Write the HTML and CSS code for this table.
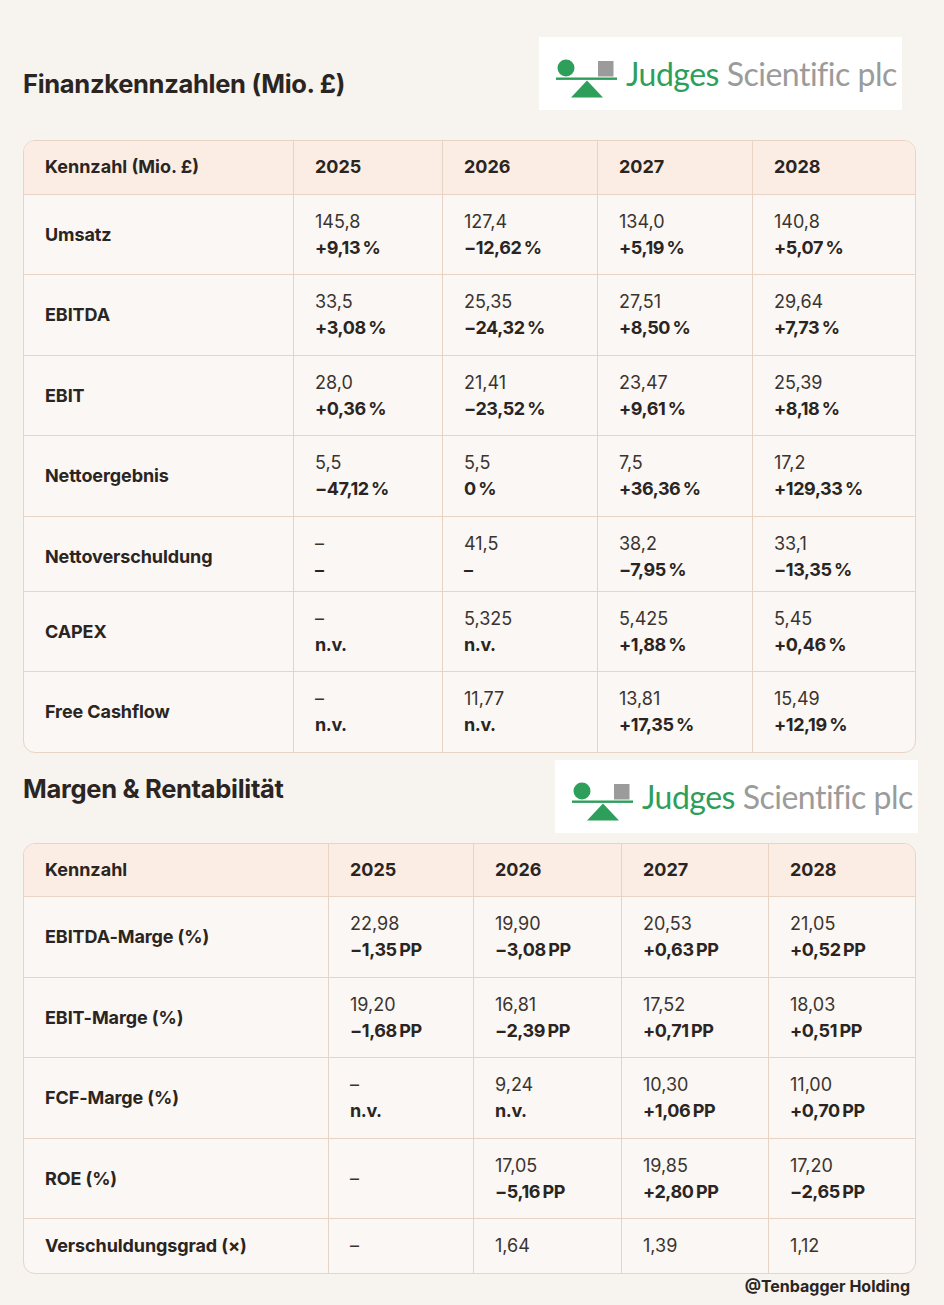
FILE: index.html
```html
<!DOCTYPE html>
<html lang="de">
<head>
<meta charset="utf-8">
<title>Judges Scientific plc – Finanzkennzahlen</title>
<link rel="stylesheet" href="styles.css">
</head>
<body>
<main class="page">
  <section class="block block--fin">
    <header class="block-head">
      <h2 class="title">Finanzkennzahlen (Mio. £)</h2>
      <div class="logo">
        <svg class="logo-mark" viewBox="0 0 62 40" width="62" height="40" aria-hidden="true">
          <circle cx="10" cy="9" r="8.5" fill="#2e9e5b"/>
          <rect x="42" y="2" width="15.5" height="15.5" fill="#9b9b9b"/>
          <rect x="0" y="18.5" width="61" height="2.4" fill="#2e9e5b"/>
          <polygon points="31,21.5 15,38.5 47,38.5" fill="#2e9e5b"/>
        </svg>
        <span class="logo-text"><span class="logo-green">Judges</span> <span class="logo-gray">Scientific plc</span></span>
      </div>
    </header>
    <div class="table-wrap">
      <table class="kpi">
        <colgroup>
          <col class="c-fin-0"><col class="c-fin-1"><col class="c-fin-2"><col class="c-fin-3"><col class="c-fin-4">
        </colgroup>
        <thead>
          <tr><th>Kennzahl (Mio. £)</th><th>2025</th><th>2026</th><th>2027</th><th>2028</th></tr>
        </thead>
        <tbody>
          <tr><td class="lbl">Umsatz</td>
            <td><span class="v">145,8</span><span class="d">+9,13&#8201;%</span></td>
            <td><span class="v">127,4</span><span class="d">−12,62&#8201;%</span></td>
            <td><span class="v">134,0</span><span class="d">+5,19&#8201;%</span></td>
            <td><span class="v">140,8</span><span class="d">+5,07&#8201;%</span></td></tr>
          <tr><td class="lbl">EBITDA</td>
            <td><span class="v">33,5</span><span class="d">+3,08&#8201;%</span></td>
            <td><span class="v">25,35</span><span class="d">−24,32&#8201;%</span></td>
            <td><span class="v">27,51</span><span class="d">+8,50&#8201;%</span></td>
            <td><span class="v">29,64</span><span class="d">+7,73&#8201;%</span></td></tr>
          <tr><td class="lbl">EBIT</td>
            <td><span class="v">28,0</span><span class="d">+0,36&#8201;%</span></td>
            <td><span class="v">21,41</span><span class="d">−23,52&#8201;%</span></td>
            <td><span class="v">23,47</span><span class="d">+9,61&#8201;%</span></td>
            <td><span class="v">25,39</span><span class="d">+8,18&#8201;%</span></td></tr>
          <tr><td class="lbl">Nettoergebnis</td>
            <td><span class="v">5,5</span><span class="d">−47,12&#8201;%</span></td>
            <td><span class="v">5,5</span><span class="d">0&#8201;%</span></td>
            <td><span class="v">7,5</span><span class="d">+36,36&#8201;%</span></td>
            <td><span class="v">17,2</span><span class="d">+129,33&#8201;%</span></td></tr>
          <tr class="row-tight"><td class="lbl">Nettoverschuldung</td>
            <td><span class="v">–</span><span class="d">–</span></td>
            <td><span class="v">41,5</span><span class="d">–</span></td>
            <td><span class="v">38,2</span><span class="d">−7,95&#8201;%</span></td>
            <td><span class="v">33,1</span><span class="d">−13,35&#8201;%</span></td></tr>
          <tr><td class="lbl">CAPEX</td>
            <td><span class="v">–</span><span class="d">n.v.</span></td>
            <td><span class="v">5,325</span><span class="d">n.v.</span></td>
            <td><span class="v">5,425</span><span class="d">+1,88&#8201;%</span></td>
            <td><span class="v">5,45</span><span class="d">+0,46&#8201;%</span></td></tr>
          <tr><td class="lbl">Free Cashflow</td>
            <td><span class="v">–</span><span class="d">n.v.</span></td>
            <td><span class="v">11,77</span><span class="d">n.v.</span></td>
            <td><span class="v">13,81</span><span class="d">+17,35&#8201;%</span></td>
            <td><span class="v">15,49</span><span class="d">+12,19&#8201;%</span></td></tr>
        </tbody>
      </table>
    </div>
  </section>

  <section class="block block--margin">
    <header class="block-head">
      <h2 class="title title--second">Margen &amp; Rentabilität</h2>
      <div class="logo logo--second">
        <svg class="logo-mark" viewBox="0 0 62 40" width="62" height="40" aria-hidden="true">
          <circle cx="10" cy="9" r="8.5" fill="#2e9e5b"/>
          <rect x="42" y="2" width="15.5" height="15.5" fill="#9b9b9b"/>
          <rect x="0" y="18.5" width="61" height="2.4" fill="#2e9e5b"/>
          <polygon points="31,21.5 15,38.5 47,38.5" fill="#2e9e5b"/>
        </svg>
        <span class="logo-text"><span class="logo-green">Judges</span> <span class="logo-gray">Scientific plc</span></span>
      </div>
    </header>
    <div class="table-wrap">
      <table class="kpi">
        <colgroup>
          <col class="c-mar-0"><col class="c-mar-1"><col class="c-mar-2"><col class="c-mar-3"><col class="c-mar-4">
        </colgroup>
        <thead>
          <tr><th>Kennzahl</th><th>2025</th><th>2026</th><th>2027</th><th>2028</th></tr>
        </thead>
        <tbody>
          <tr><td class="lbl">EBITDA-Marge (%)</td>
            <td><span class="v">22,98</span><span class="d">−1,35&#8201;PP</span></td>
            <td><span class="v">19,90</span><span class="d">−3,08&#8201;PP</span></td>
            <td><span class="v">20,53</span><span class="d">+0,63&#8201;PP</span></td>
            <td><span class="v">21,05</span><span class="d">+0,52&#8201;PP</span></td></tr>
          <tr><td class="lbl">EBIT-Marge (%)</td>
            <td><span class="v">19,20</span><span class="d">−1,68&#8201;PP</span></td>
            <td><span class="v">16,81</span><span class="d">−2,39&#8201;PP</span></td>
            <td><span class="v">17,52</span><span class="d">+0,71&#8201;PP</span></td>
            <td><span class="v">18,03</span><span class="d">+0,51&#8201;PP</span></td></tr>
          <tr><td class="lbl">FCF-Marge (%)</td>
            <td><span class="v">–</span><span class="d">n.v.</span></td>
            <td><span class="v">9,24</span><span class="d">n.v.</span></td>
            <td><span class="v">10,30</span><span class="d">+1,06&#8201;PP</span></td>
            <td><span class="v">11,00</span><span class="d">+0,70&#8201;PP</span></td></tr>
          <tr><td class="lbl">ROE (%)</td>
            <td><span class="v">–</span></td>
            <td><span class="v">17,05</span><span class="d">−5,16&#8201;PP</span></td>
            <td><span class="v">19,85</span><span class="d">+2,80&#8201;PP</span></td>
            <td><span class="v">17,20</span><span class="d">−2,65&#8201;PP</span></td></tr>
          <tr><td class="lbl">Verschuldungsgrad (×)</td>
            <td><span class="v">–</span></td>
            <td><span class="v">1,64</span></td>
            <td><span class="v">1,39</span></td>
            <td><span class="v">1,12</span></td></tr>
        </tbody>
      </table>
    </div>
    <p class="credit">@Tenbagger Holding</p>
  </section>
</main>
</body>
</html>
```

FILE: styles.css
```css
* { box-sizing: border-box; }

html, body {
  margin: 0;
  padding: 0;
  background: #f7f3ef;
}

body {
  font-family: "Inter", "Open Sans", sans-serif;
  color: #2a2522;
}

.page {
  padding: 37px 28px 0 23px;
}

.block-head {
  display: flex;
  justify-content: space-between;
  align-items: flex-start;
}

.block--fin .block-head {
  margin-bottom: 30px;
}

.block--margin .block-head {
  margin-top: 7px;
  margin-bottom: 10px;
}

.title {
  margin: 31px 0 0;
  font-size: 25.5px;
  line-height: 32px;
  font-weight: 700;
  letter-spacing: -0.3px;
}

.title--second {
  margin-top: 13px;
}

.logo {
  width: 363px;
  height: 73px;
  background: #ffffff;
  display: flex;
  align-items: flex-start;
  padding: 22px 0 0 17px;
  margin-right: 14px;
}

.logo--second {
  margin-right: -2px;
}

.logo-mark {
  flex: none;
  display: block;
}

.logo-text {
  margin-left: 8px;
  margin-top: -5px;
  font-family: "Lato", "Open Sans", sans-serif;
  font-size: 32px;
  line-height: 40px;
  letter-spacing: -0.5px;
  white-space: nowrap;
}

.logo-green { color: #2e9e5b; }
.logo-gray { color: #9b9b9b; }

.table-wrap {
  border: 1px solid #e7d4c5;
  border-radius: 12px;
  overflow: hidden;
  background: #fbf7f4;
}

.kpi {
  width: 100%;
  border-collapse: separate;
  border-spacing: 0;
  table-layout: fixed;
}

.c-fin-0 { width: 270px; }
.c-fin-1 { width: 149px; }
.c-fin-2 { width: 155px; }
.c-fin-3 { width: 155px; }
.c-fin-4 { width: auto; }

.c-mar-0 { width: 305px; }
.c-mar-1 { width: 145px; }
.c-mar-2 { width: 148px; }
.c-mar-3 { width: 147px; }
.c-mar-4 { width: auto; }

.kpi th,
.kpi td {
  text-align: left;
  padding: 14px 21px 13.5px;
  font-size: 18px;
  line-height: 26px;
  border-right: 1px solid #e7d4c5;
  border-bottom: 1px solid #e7d4c5;
  vertical-align: middle;
}

.kpi th:last-child,
.kpi td:last-child {
  border-right: none;
}

.kpi tbody tr:last-child td {
  border-bottom: none;
}

.kpi thead th {
  background: #fbede3;
  font-weight: 700;
  padding-top: 13px;
}

.kpi td {
  color: #2a2522;
}

.kpi .lbl {
  font-weight: 700;
  letter-spacing: -0.1px;
}

.kpi .row-tight td {
  padding-bottom: 8px;
}

.v,
.d {
  display: block;
}

.v {
  font-weight: 400;
  color: #3a3430;
}

.d {
  font-weight: 700;
  letter-spacing: -0.4px;
}

.credit {
  margin: 1px 6px 0 0;
  text-align: right;
  font-size: 16px;
  line-height: 22px;
  font-weight: 700;
}
```
